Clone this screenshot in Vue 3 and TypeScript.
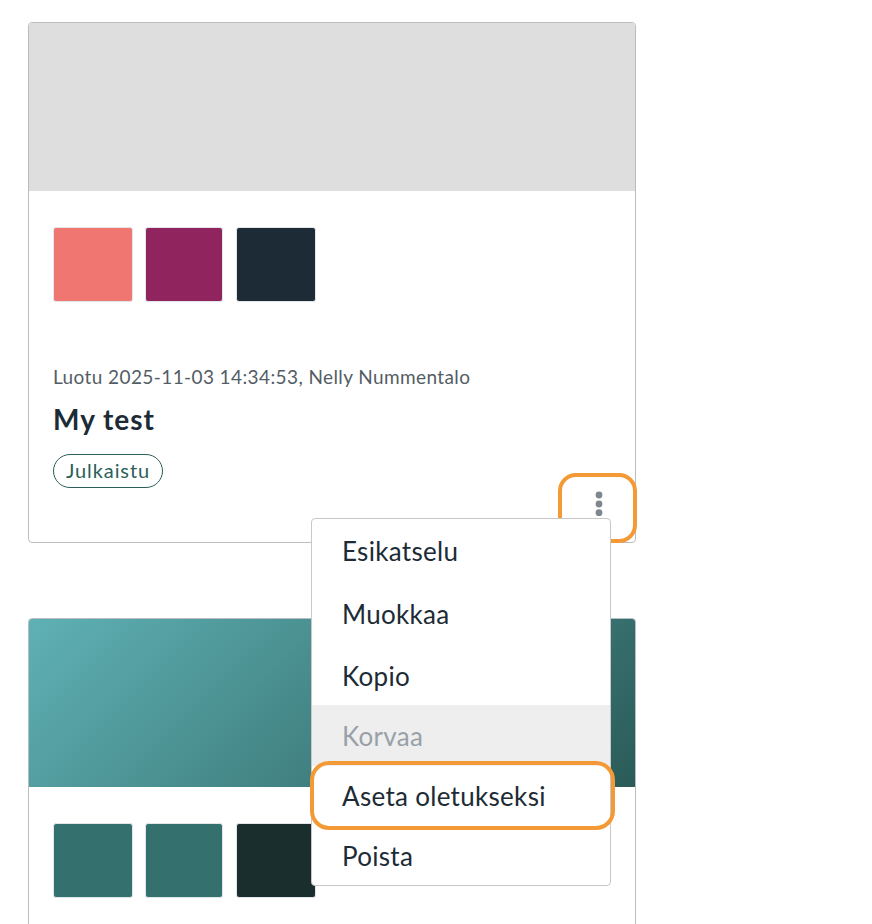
<script setup lang="ts">
const cards = [
  { id: 1, cover: 'plain', swatches: ['#f07672', '#90245f', '#1c2b35'] },
  { id: 2, cover: 'teal', swatches: ['#34706d', '#34706d', '#1a2e2d'] },
]
const items = [
  { label: 'Esikatselu', cls: 'tall top' },
  { label: 'Muokkaa', cls: 'tall' },
  { label: 'Kopio', cls: 'tall short' },
  { label: 'Korvaa', cls: 'disabled' },
  { label: 'Aseta oletukseksi', cls: 'marked' },
  { label: 'Poista', cls: '' },
]
</script>

<template>
  <div class="page">
    <article v-for="c in cards" :key="c.id" class="card" :class="{ first: c.id === 1 }">
      <div class="cover" :class="c.cover"></div>
      <div class="body">
        <div class="swatches">
          <span v-for="(s, i) in c.swatches" :key="i" class="swatch" :style="{ background: s }"></span>
        </div>
        <template v-if="c.id === 1">
          <p class="meta">Luotu 2025-11-03 14:34:53, Nelly Nummentalo</p>
          <h2 class="title">My test</h2>
          <span class="tag">Julkaistu</span>
          <button class="more" aria-label="Lisää">
            <svg width="8" height="26" viewBox="0 0 8 26">
              <circle cx="4" cy="4" r="3.4" />
              <circle cx="4" cy="13" r="3.4" />
              <circle cx="4" cy="21.7" r="3.4" />
            </svg>
          </button>
          <ul class="menu">
            <li v-for="it in items" :key="it.label" class="item" :class="it.cls">{{ it.label }}</li>
          </ul>
        </template>
      </div>
    </article>
  </div>
</template>

<style>
html, body { margin: 0; background: #fff; }
</style>

<style scoped>
.page {
  height: 924px;
  box-sizing: border-box;
  overflow: hidden;
  padding: 22px 0 0 28px;
  display: flex;
  flex-direction: column;
  gap: 75px;
  font-family: "Lato", "Noto Sans", sans-serif;
  color: #1c2b35;
}
.card {
  position: relative;
  flex: none;
  width: 608px;
  height: 521px;
  box-sizing: border-box;
  border: 1px solid #b9bdc1;
  border-radius: 4px;
  background: #fff;
}
.first { z-index: 2; }
.cover {
  height: 168px;
  border-radius: 3px 3px 0 0;
}
.plain { background: #dedede; }
.teal { background: linear-gradient(135deg, #5fb1b5 0%, #2a5b58 100%); }
.body { padding: 36px 24px 0; }
.swatches { display: flex; gap: 13px; }
.swatch {
  width: 78px;
  height: 73px;
  border: 1px solid #e2e5ea;
  border-radius: 3px;
  margin-right: -1px;
}
.swatch:nth-child(2) { width: 76px; margin-right: 0; }
.swatch:nth-child(3) { width: 78px; }
.meta {
  margin: 63px 0 0;
  font-size: 19px;
  line-height: 24px;
  letter-spacing: 0.4px;
  color: #535d65;
}
.title {
  margin: 13px 0 0;
  font-size: 28px;
  line-height: 34px;
  font-weight: 700;
  letter-spacing: 1px;
}
.tag {
  display: inline-block;
  margin-top: 18px;
  height: 34px;
  box-sizing: border-box;
  padding: 0 12px;
  border: 1px solid #2b5f5a;
  border-radius: 17px;
  font-size: 20px;
  line-height: 31px;
  letter-spacing: 0.9px;
  color: #2b5f5a;
}
.more {
  position: absolute;
  left: 529px;
  top: 450px;
  width: 79px;
  height: 70px;
  box-sizing: border-box;
  padding: 14px 0 0 2px;
  background: transparent;
  border: 4px solid #f39a36;
  border-radius: 18px;
  display: flex;
  justify-content: center;
  align-items: flex-start;
}
.more svg { fill: #7f868d; display: block; }
.menu {
  position: absolute;
  left: 282px;
  top: 495px;
  width: 300px;
  height: 368px;
  box-sizing: border-box;
  margin: 0;
  padding: 1px 0 0;
  list-style: none;
  background: #fff;
  border: 1px solid #c6c8ca;
  border-radius: 4px;
}
.item {
  position: relative;
  height: 60px;
  padding-left: 30px;
  display: flex;
  align-items: center;
  font-size: 26px;
  letter-spacing: 0.3px;
  color: #1c2b35;
}
.tall { height: 62px; padding-top: 1px; box-sizing: border-box; }
.top { padding-top: 0; padding-bottom: 1px; }
.short { height: 61px; padding-top: 2px; }
.disabled { background: #eeeeee; color: #98a1a9; height: 61px; }
.marked::after {
  content: "";
  position: absolute;
  left: -2px;
  right: -5px;
  top: -5px;
  bottom: -4px;
  border: 4px solid #f39a36;
  border-radius: 19px;
}
</style>
